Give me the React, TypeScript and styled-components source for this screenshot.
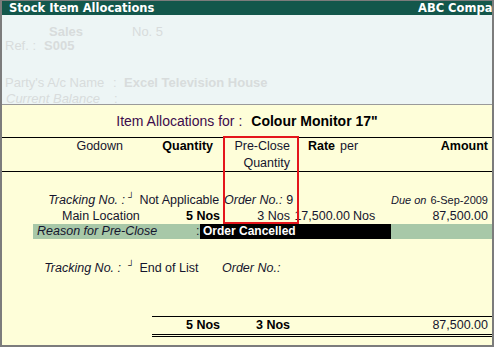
import styled, { createGlobalStyle } from 'styled-components';

const GlobalStyle = createGlobalStyle`
  html, body { margin: 0; padding: 0; background: #fff; }
  body { font-family: "Liberation Sans", Arial, sans-serif; }
`;

const DATA_COLS = '124px 94px 72px 58px 38px 1fr';
const HEAD_COLS = '124px 94px 72px 43px 53px 1fr';

const Frame = styled.div`
  width: 494px;
  height: 347px;
  box-sizing: border-box;
  border: 2px solid #7c7c7c;
  border-top-width: 1px;
  display: flex;
  flex-direction: column;
  overflow: hidden;
`;

const TitleBar = styled.header`
  flex: none;
  height: 14px;
  display: grid;
  grid-template-columns: 409px max-content;
  padding-left: 7px;
  background: #13574b;
  color: #fff;
  font: bold 11.5px/14px "DejaVu Sans", Tahoma, sans-serif;
  white-space: nowrap;
  overflow: hidden;
`;

const TopSection = styled.section`
  flex: none;
  height: 89px;
  box-sizing: border-box;
  padding-top: 10px;
  background: #edf5f5;
  color: #d8dcdc;
  font-size: 13px;
  overflow: hidden;
`;

const FadedRow = styled.div<{ $pl: number; $mt?: number }>`
  display: flex;
  height: 14px;
  line-height: 14px;
  padding-left: ${(p) => p.$pl}px;
  margin-top: ${(p) => p.$mt ?? 0}px;
  white-space: nowrap;
`;

const Field = styled.span<{ $w?: number; $bold?: boolean; $italic?: boolean }>`
  flex: none;
  width: ${(p) => (p.$w ? `${p.$w}px` : 'auto')};
  font-weight: ${(p) => (p.$bold ? 'bold' : 'normal')};
  font-style: ${(p) => (p.$italic ? 'italic' : 'normal')};
`;

const Spacer = styled.div<{ $h: number }>`
  height: ${(p) => p.$h}px;
`;

const Panel = styled.section`
  position: relative;
  flex: 1;
  display: flex;
  flex-direction: column;
  background: #fefed9;
  border-top: 1px solid #9a9a9a;
  color: #15152e;
  font-size: 12.5px;
`;

const ItemTitle = styled.div`
  flex: none;
  height: 33px;
  box-sizing: border-box;
  display: flex;
  justify-content: center;
  align-items: center;
  gap: 9px;
  border-bottom: 1px solid #000;
  font-size: 14px;
  color: #3c0c4c;
  white-space: nowrap;
  b { color: #000; }
`;

const HeaderRow = styled.div`
  flex: none;
  height: 34px;
  box-sizing: border-box;
  display: grid;
  grid-template-columns: ${HEAD_COLS};
  padding-right: 4px;
  border-bottom: 1px solid #000;
  line-height: 16.5px;
  white-space: nowrap;
`;

const DataRow = styled.div<{ $mt?: number }>`
  flex: none;
  height: 16px;
  display: grid;
  grid-template-columns: ${DATA_COLS};
  padding-right: 4px;
  margin-top: ${(p) => p.$mt ?? 0}px;
  line-height: 16px;
  white-space: nowrap;
`;

const Cell = styled.div<{
  $align?: 'left' | 'right';
  $pl?: number;
  $pr?: number;
  $bold?: boolean;
  $italic?: boolean;
  $span?: number;
  $split?: boolean;
}>`
  min-width: 0;
  display: ${(p) => (p.$split ? 'flex' : 'block')};
  justify-content: space-between;
  gap: 4px;
  text-align: ${(p) => p.$align ?? 'left'};
  padding-left: ${(p) => p.$pl ?? 0}px;
  padding-right: ${(p) => p.$pr ?? 0}px;
  font-weight: ${(p) => (p.$bold ? 'bold' : 'normal')};
  font-style: ${(p) => (p.$italic ? 'italic' : 'normal')};
  grid-column: ${(p) => (p.$span ? `span ${p.$span}` : 'auto')};
  color: ${(p) => (p.$bold ? '#000' : 'inherit')};
`;

const Corner = styled.span`
  display: inline-block;
  font-size: 9px;
  vertical-align: 4px;
  margin-right: 5px;
  line-height: 1;
`;

const Label = styled.span<{ $italic?: boolean }>`
  font-style: ${(p) => (p.$italic ? 'italic' : 'normal')};
`;

const DueInfo = styled.span`
  font-size: 11px;
  i { margin-right: 4px; }
`;

const ReasonRow = styled.div`
  flex: none;
  height: 15px;
  margin-left: 31px;
  display: grid;
  grid-template-columns: 163px 4px 191px 1fr;
  background: #a8c8a8;
  line-height: 15px;
  white-space: nowrap;
`;

const ReasonLabel = styled.div`
  padding-left: 4px;
  font-style: italic;
`;

const ReasonValue = styled.div`
  padding-left: 3px;
  background: #000;
  color: #fff;
  font-weight: bold;
  font-size: 12px;
`;

const TotalsRow = styled.div`
  flex: none;
  height: 17px;
  margin-top: 40px;
  margin-left: 150px;
  display: grid;
  grid-template-columns: 68px 72px 1fr;
  padding-right: 4px;
  border-top: 1px solid #000;
  border-bottom: 3px double #000;
  line-height: 17px;
  white-space: nowrap;
`;

const Highlight = styled.div`
  position: absolute;
  top: 31px;
  left: 221px;
  width: 76px;
  height: 88px;
  box-sizing: border-box;
  border: 2px solid #e4161c;
  pointer-events: none;
`;

export default function App() {
  return (
    <>
      <GlobalStyle />
      <Frame>
        <TitleBar>
          <span>Stock Item Allocations</span>
          <span>ABC Company</span>
        </TitleBar>

        <TopSection>
          <FadedRow $pl={47}>
            <Field $w={83} $bold>Sales</Field>
            <Field>No. 5</Field>
          </FadedRow>
          <FadedRow $pl={3}>
            <Field $w={39}>Ref. :</Field>
            <Field $bold>S005</Field>
          </FadedRow>
          <Spacer $h={23} />
          <FadedRow $pl={3}>
            <Field $w={108}>Party's A/c Name</Field>
            <Field $w={11}>:</Field>
            <Field $bold>Excel Television House</Field>
          </FadedRow>
          <FadedRow $pl={4} $mt={2}>
            <Field $w={108} $italic>Current Balance</Field>
            <Field>:</Field>
          </FadedRow>
        </TopSection>

        <Panel>
          <ItemTitle>
            <span>Item Allocations for :</span>
            <b>Colour Monitor 17"</b>
          </ItemTitle>

          <HeaderRow>
            <Cell $align="right" $pr={3}>Godown</Cell>
            <Cell $align="right" $pr={7} $bold>Quantity</Cell>
            <Cell $align="right" $pr={2}>Pre-Close<br />Quantity</Cell>
            <Cell $align="right" $bold>Rate</Cell>
            <Cell $pl={5}>per</Cell>
            <Cell $align="right" $bold>Amount</Cell>
          </HeaderRow>

          <DataRow $mt={20}>
            <Cell $align="right" $pr={1} $italic>Tracking No. :</Cell>
            <Cell $pl={2}><Corner>┘</Corner>Not Applicable</Cell>
            <Cell $pl={4} $pr={2} $split>
              <Label $italic>Order No.:</Label>
              <Label>9</Label>
            </Cell>
            <Cell $align="right" $span={3}>
              <DueInfo><i>Due on</i>6-Sep-2009</DueInfo>
            </Cell>
          </DataRow>

          <DataRow>
            <Cell $pl={60}>Main Location</Cell>
            <Cell $align="right" $bold>5 Nos</Cell>
            <Cell $align="right" $pr={2}>3 Nos</Cell>
            <Cell $align="right">17,500.00</Cell>
            <Cell $pl={3}>Nos</Cell>
            <Cell $align="right">87,500.00</Cell>
          </DataRow>

          <ReasonRow>
            <ReasonLabel>Reason for Pre-Close</ReasonLabel>
            <div>:</div>
            <ReasonValue>Order Cancelled</ReasonValue>
            <div />
          </ReasonRow>

          <DataRow $mt={21}>
            <Cell $align="right" $pr={5} $italic>Tracking No. :</Cell>
            <Cell $pl={2}><Corner>┘</Corner>End of List</Cell>
            <Cell $pl={2}><Label $italic>Order No.:</Label></Cell>
          </DataRow>

          <TotalsRow>
            <Cell $align="right" $bold>5 Nos</Cell>
            <Cell $align="right" $pr={2} $bold>3 Nos</Cell>
            <Cell $align="right">87,500.00</Cell>
          </TotalsRow>

          <Highlight />
        </Panel>
      </Frame>
    </>
  );
}
